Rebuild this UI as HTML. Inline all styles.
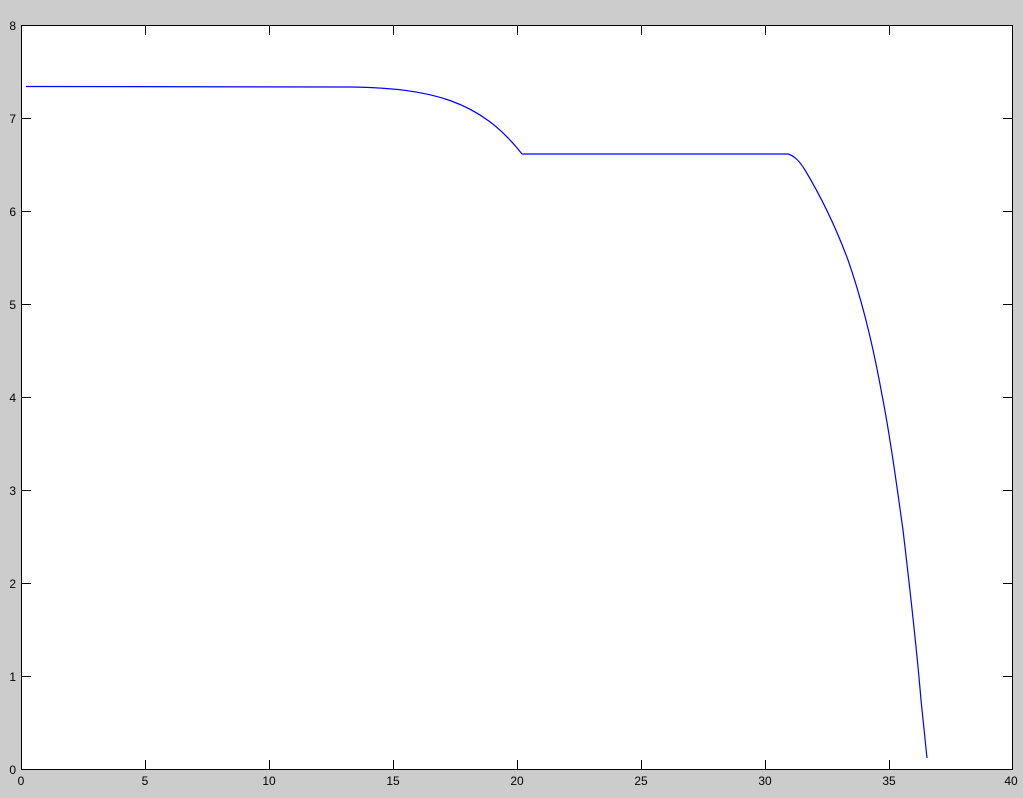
<!DOCTYPE html>
<html><head><style>
html,body{margin:0;padding:0;background:#cccccc;}
svg{display:block;}
text{font-family:"Liberation Sans",sans-serif;font-size:12px;fill:#000;}
</style></head><body>
<svg width="1023" height="798" xmlns="http://www.w3.org/2000/svg">
<rect x="0" y="0" width="1023" height="798" fill="#cccccc"/>
<rect x="21.5" y="25.5" width="991" height="744" fill="#fff" stroke="#000" stroke-width="1"/>
<g stroke="#000" stroke-width="1">
<path d="M145.5,770v-10M269.5,770v-10M393.5,770v-10M517.5,770v-10M641.5,770v-10M765.5,770v-10M889.5,770v-10
M145.5,25v10M269.5,25v10M393.5,25v10M517.5,25v10M641.5,25v10M765.5,25v10M889.5,25v10
M21,676.5h10M21,583.5h10M21,490.5h10M21,397.5h10M21,304.5h10M21,211.5h10M21,118.5h10
M1013,676.5h-10M1013,583.5h-10M1013,490.5h-10M1013,397.5h-10M1013,304.5h-10M1013,211.5h-10M1013,118.5h-10"/>
</g>
<g text-anchor="end">
<text x="16" y="774">0</text><text x="16" y="681">1</text><text x="16" y="588">2</text><text x="16" y="495">3</text>
<text x="16" y="402">4</text><text x="16" y="309">5</text><text x="16" y="216">6</text><text x="16" y="123">7</text><text x="16" y="30">8</text>
</g>
<g text-anchor="middle">
<text x="21" y="785">0</text><text x="145" y="785">5</text><text x="269" y="785">10</text><text x="393" y="785">15</text>
<text x="517" y="785">20</text><text x="641" y="785">25</text><text x="765" y="785">30</text><text x="889" y="785">35</text><text x="1011" y="785">40</text>
</g>
<path fill="none" stroke="#0000ff" stroke-width="1.2" d="M26,86.5 L350,87 C430,88 480,100 522,154 L788,154 C795,156 800,162 805,170 C820,195 835,225 848,260 C862,300 873,345 882,395 C891,440 898,495 903,530 C910,590 916,640 921,700 L927,758"/>
</svg>
</body></html>
